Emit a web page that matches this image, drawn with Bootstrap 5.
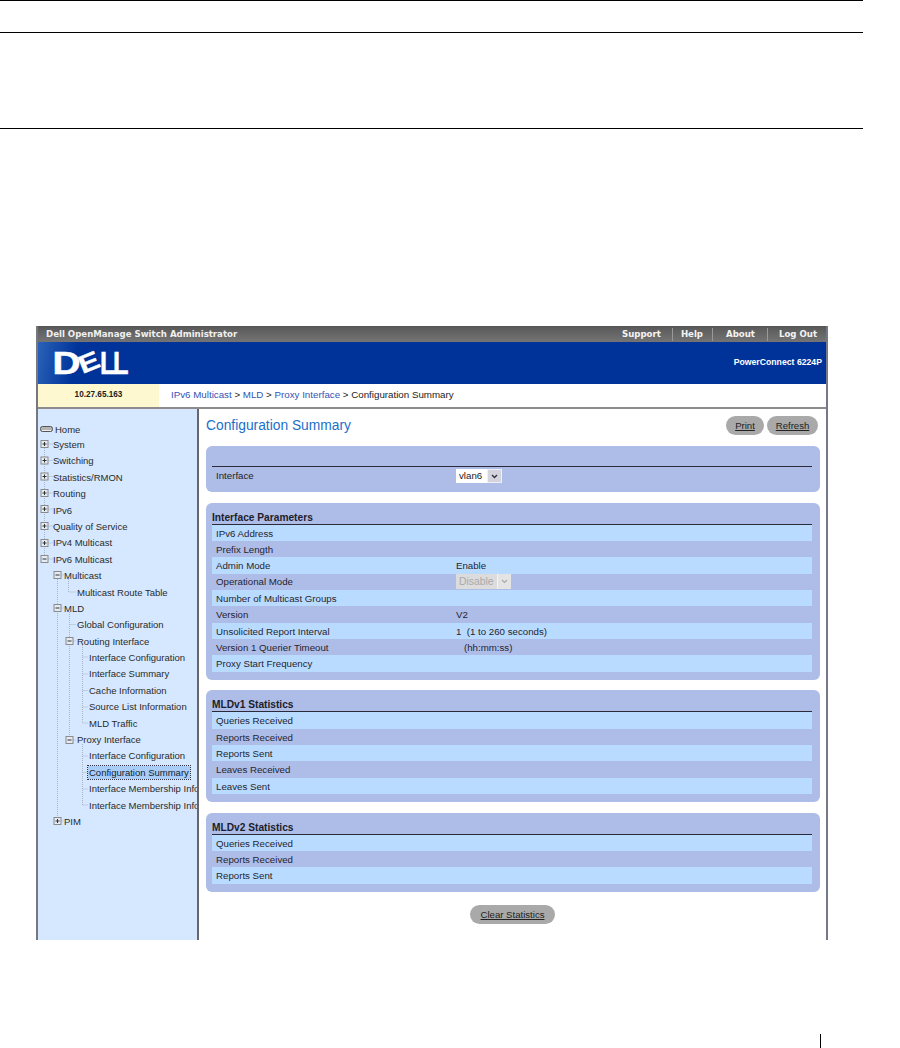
<!DOCTYPE html>
<html lang="en">
<head>
<meta charset="utf-8">
<title>Configuration Summary</title>
<link href="https://cdn.jsdelivr.net/npm/bootstrap@5.3.0/dist/css/bootstrap.min.css" rel="stylesheet">
<style>
html,body{margin:0;background:#fff;height:1048px;overflow:hidden;font-family:"Liberation Sans",Arial,sans-serif}
.page-rule{border-top:1px solid #000;width:863px}
.rule-a{height:32px}
.rule-b{height:96px}
.rule-c{height:198px}
.shot{margin-left:36px;width:792px;height:614px;overflow:hidden;border-left:2px solid #77777f;border-right:2px solid #77778a;font-size:9.7px;color:#222}
.titlebar{height:16px;background:linear-gradient(#5a5a5a,#747474);border-top:1px solid #555;margin-left:-2px;margin-right:-2px;color:#f0f0f0;font-family:"DejaVu Sans",sans-serif;font-weight:700;font-size:8.6px;padding-left:10px;padding-right:11px}
.tlink{color:#f4f4f4;padding:0 11px;border-left:1px solid #999;line-height:13px;text-decoration:none}
.tlink:first-child{border-left:0}
.tlink:last-child{padding-right:0}
.tlink.tl-help{padding:0 9px 0 8px}
.tlink.tl-about{padding:0 12px 0 13px}
.bluebar{height:42px;background:linear-gradient(100deg,#2a62b8 0,#003399 40px);color:#fff;font-weight:700;font-size:8.7px;padding-right:4px}
.logo{display:block;margin-left:17px;overflow:visible}
.logo text{font-family:"Liberation Sans",Arial,sans-serif;font-weight:700;font-size:31px;fill:#fff;stroke:#fff;stroke-width:.5px}
.crumbbar{height:25px;border-bottom:2px solid #8c8c8c;font-size:9.75px}
.ipcell{width:121px;background:#fdf8d0;font-weight:700;font-size:8.2px}
.crumbs{padding-left:12px}
.crumbs a{color:#3553b5;text-decoration:none}
.bodywrap{height:531px}
.sidebar{width:159px;flex:none;background:#d5e8ff;border-right:2px solid #66666c;position:relative;overflow:hidden;padding-top:13px;box-sizing:content-box;font-size:9.5px}
.tree-lines{position:absolute;left:0;top:0;pointer-events:none}
.trow{height:16.4px;line-height:16.4px;white-space:nowrap;color:#2a2a2a}
.trow.home{height:15px;line-height:15px;padding-left:17px}
.lv0{padding-left:15px}
.lv1{padding-left:26px}
.lv2{padding-left:39px}
.lv3{padding-left:51px}
.selected-node{display:inline-block;background:#a9cdf6;outline:1px dotted #334;line-height:13px;padding:0 1px;margin-left:-1px;color:#123}
.mainpane{width:627px;flex:none;padding:0 6px 0 7px}
.pagehead{height:37px;padding-bottom:4px}
.pagetitle{color:#1b6fc8;font-size:13.8px;margin:0;font-weight:400;line-height:1}
.pillbtn{background:#a9a9a9;color:#222;font-size:9.6px;text-decoration:underline;height:19px;line-height:19px;padding:0;border:0;text-align:center;display:block}
.pb-print{width:38px;margin-right:3px}
.pb-refresh{width:51px;margin-right:2px}
.pb-clear{width:85px;margin-top:13px;margin-left:264px}
.panel{background:#aebce8;border-radius:6px;padding:0 8px 8px 6px}
.panel+.panel{margin-top:10.7px}
.panel-head{height:22px;border-bottom:1px solid #2a2a3a;font-weight:700;color:#1c1c2a;line-height:30px;font-size:10.2px}
.panel-head.blank{height:21px}
.prow{height:16.33px;line-height:17.4px;padding-left:4px;color:#25252f}
.prow:nth-child(odd){background:#b9dbff}
.pcell-label{width:240px;flex:none}
.row-plain{height:17px;padding-left:4px;padding-top:1px}
.fake-select{font-size:9.7px;height:14px;line-height:14px}
.fake-select span.v{background:#fff;padding:0 3px;width:31px}
.fake-select span.a{background:#d4d4dc;width:15px;border:1px solid #f0f0f4}
.fake-select.off{height:15px;line-height:15px;width:55px;background:#dcdcdc;color:#aaa;font-size:10.4px}
.fake-select.off span.v{background:transparent;padding-left:3px;width:41px}
.fake-select.off span.a{background:#e4e4e4;border:0;border-left:1px solid #f4f4f4;width:14px}
.footer-mark{width:1px;height:14px;background:#000;margin-left:820px;margin-top:94px}
</style>
</head>
<body>
<div class="page-rule rule-a"></div>
<div class="page-rule rule-b"></div>
<div class="page-rule rule-c"></div>

<div class="shot">
  <div class="titlebar d-flex justify-content-between align-items-center">
    <span>Dell OpenManage Switch Administrator</span>
    <nav class="d-flex align-items-center">
      <a class="tlink" href="#">Support</a><a class="tlink tl-help" href="#">Help</a><a class="tlink tl-about" href="#">About</a><a class="tlink" href="#">Log Out</a>
    </nav>
  </div>
  <div class="bluebar d-flex justify-content-between align-items-center">
    <svg class="logo" width="78" height="30" viewBox="0 0 78 30" aria-label="DELL">
      <text transform="translate(-2.6 26) scale(1.25 1)">D</text>
      <text transform="translate(27.4 26) rotate(-22) scale(1 .8)">E</text>
      <text transform="translate(45 26) scale(.82 1)">L</text>
      <text transform="translate(58 26) scale(.82 1)">L</text>
    </svg>
    <span>PowerConnect 6224P</span>
  </div>
  <div class="crumbbar d-flex">
    <div class="ipcell d-flex align-items-center justify-content-center">10.27.65.163</div>
    <div class="crumbs d-flex align-items-center"><span><a href="#">IPv6 Multicast</a> &gt; <a href="#">MLD</a> &gt; <a href="#">Proxy Interface</a> &gt; Configuration Summary</span></div>
  </div>
  <div class="bodywrap d-flex">
    <aside class="sidebar">
      <svg class="tree-lines" width="161" height="531" viewBox="38 409 161 531" aria-hidden="true">
        <defs>
          <g id="tbox"><rect x="-3.5" y="-3.5" width="7" height="7" fill="#e4ebf4" stroke="#8a8a8a"/><path d="M-2 0H2" stroke="#333"/></g>
          <g id="tplus"><use href="#tbox"/><path d="M0 -2V2" stroke="#333"/></g>
        </defs>
        <g fill="none" stroke="#a9b4c4" stroke-dasharray="1 1">
          <path d="M44.5 444V559M44.5 444H53M44.5 460.5H53M44.5 476.5H53M44.5 493H53M44.5 509H53M44.5 526H53M44.5 543H53M44.5 559H53"/>
          <path d="M57.5 575V821M57.5 575H64M57.5 608H64M57.5 821H64"/>
          <path d="M68.5 579V592H76"/>
          <path d="M69.5 612V740M69.5 624.5H76M69.5 641H76M69.5 740H76"/>
          <path d="M82.5 645V723M82.5 657H88M82.5 674H88M82.5 690.5H88M82.5 707H88M82.5 723H88"/>
          <path d="M82.5 744V805M82.5 756H88M82.5 772.5H88M82.5 789H88M82.5 805H88"/>
        </g>
        <use href="#tplus" x="44.5" y="444"/><use href="#tplus" x="44.5" y="460.5"/><use href="#tplus" x="44.5" y="476.5"/><use href="#tplus" x="44.5" y="493"/><use href="#tplus" x="44.5" y="509"/><use href="#tplus" x="44.5" y="526"/><use href="#tplus" x="44.5" y="543"/><use href="#tbox" x="44.5" y="559"/>
        <use href="#tbox" x="57.5" y="575"/><use href="#tbox" x="57.5" y="608"/><use href="#tplus" x="57.5" y="821"/>
        <use href="#tbox" x="69.5" y="641"/><use href="#tbox" x="69.5" y="740"/>
        <g transform="translate(40 426)"><rect x=".5" y=".5" width="12" height="5" rx="2" fill="#b4b4b4" stroke="#555"/><path d="M2 4.5H11" stroke="#eee"/></g>
      </svg>
      <div class="trow home">Home</div>
      <div class="trow lv0">System</div>
      <div class="trow lv0">Switching</div>
      <div class="trow lv0">Statistics/RMON</div>
      <div class="trow lv0">Routing</div>
      <div class="trow lv0">IPv6</div>
      <div class="trow lv0">Quality of Service</div>
      <div class="trow lv0">IPv4 Multicast</div>
      <div class="trow lv0">IPv6 Multicast</div>
      <div class="trow lv1">Multicast</div>
      <div class="trow lv2">Multicast Route Table</div>
      <div class="trow lv1">MLD</div>
      <div class="trow lv2">Global Configuration</div>
      <div class="trow lv2">Routing Interface</div>
      <div class="trow lv3">Interface Configuration</div>
      <div class="trow lv3">Interface Summary</div>
      <div class="trow lv3">Cache Information</div>
      <div class="trow lv3">Source List Information</div>
      <div class="trow lv3">MLD Traffic</div>
      <div class="trow lv2">Proxy Interface</div>
      <div class="trow lv3">Interface Configuration</div>
      <div class="trow lv3"><span class="selected-node">Configuration Summary</span></div>
      <div class="trow lv3">Interface Membership Info</div>
      <div class="trow lv3">Interface Membership Info</div>
      <div class="trow lv1">PIM</div>
    </aside>
    <main class="mainpane">
      <div class="pagehead d-flex justify-content-between align-items-center">
        <h1 class="pagetitle">Configuration Summary</h1>
        <div class="d-flex"><a class="pillbtn pb-print rounded-pill" href="#">Print</a><a class="pillbtn pb-refresh rounded-pill" href="#">Refresh</a></div>
      </div>
      <section class="panel">
        <div class="panel-head blank"></div>
        <div class="row-plain d-flex align-items-center">
          <div class="pcell-label">Interface</div>
          <div class="fake-select d-flex"><span class="v">vlan6</span><span class="a d-flex align-items-center justify-content-center"><svg width="7" height="5" viewBox="0 0 7 5"><path d="M1 1L3.5 3.5L6 1" fill="none" stroke="#334" stroke-width="1.4"/></svg></span></div>
        </div>
      </section>
      <section class="panel">
        <div class="panel-head">Interface Parameters</div>
        <div>
          <div class="prow d-flex"><div class="pcell-label">IPv6 Address</div></div>
          <div class="prow d-flex"><div class="pcell-label">Prefix Length</div></div>
          <div class="prow d-flex"><div class="pcell-label">Admin Mode</div><div>Enable</div></div>
          <div class="prow d-flex align-items-center"><div class="pcell-label">Operational Mode</div><div class="fake-select off d-flex"><span class="v">Disable</span><span class="a d-flex align-items-center justify-content-center"><svg width="7" height="5" viewBox="0 0 7 5"><path d="M1 1L3.5 3.5L6 1" fill="none" stroke="#aaa" stroke-width="1.2"/></svg></span></div></div>
          <div class="prow d-flex"><div class="pcell-label">Number of Multicast Groups</div></div>
          <div class="prow d-flex"><div class="pcell-label">Version</div><div>V2</div></div>
          <div class="prow d-flex"><div class="pcell-label">Unsolicited Report Interval</div><div>1&nbsp; (1 to 260 seconds)</div></div>
          <div class="prow d-flex"><div class="pcell-label">Version 1 Querier Timeout</div><div class="ps-2">(hh:mm:ss)</div></div>
          <div class="prow d-flex"><div class="pcell-label">Proxy Start Frequency</div></div>
        </div>
      </section>
      <section class="panel">
        <div class="panel-head">MLDv1 Statistics</div>
        <div>
          <div class="prow">Queries Received</div>
          <div class="prow">Reports Received</div>
          <div class="prow">Reports Sent</div>
          <div class="prow">Leaves Received</div>
          <div class="prow">Leaves Sent</div>
        </div>
      </section>
      <section class="panel">
        <div class="panel-head">MLDv2 Statistics</div>
        <div>
          <div class="prow">Queries Received</div>
          <div class="prow">Reports Received</div>
          <div class="prow">Reports Sent</div>
        </div>
      </section>
      <a class="pillbtn pb-clear rounded-pill" href="#">Clear Statistics</a>
    </main>
  </div>
</div>
<div class="footer-mark"></div>
<script src="https://cdn.jsdelivr.net/npm/bootstrap@5.3.0/dist/js/bootstrap.bundle.min.js"></script>
</body>
</html>
